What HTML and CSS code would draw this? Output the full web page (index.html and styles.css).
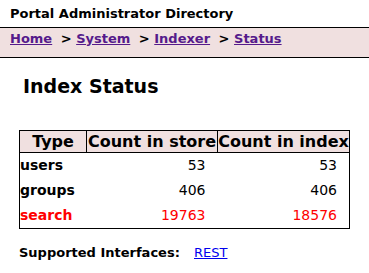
FILE: index.html
```html
<!DOCTYPE html>
<html lang="en">
<head>
  <meta charset="UTF-8" />
  <title>Index Status</title>
  <link rel="stylesheet" href="styles.css">
</head>
<body>
  <div class="topbar">Portal Administrator Directory</div>
  <div class="crumbs">
    <a href="#">Home</a> &gt; <a href="#">System</a> &gt; <a href="#">Indexer</a> &gt; <a href="#">Status</a>
  </div>

  <div class="content">
    <h1>Index Status</h1>

    <table class="status">
      <tr>
        <th class="c-type">Type</th>
        <th class="c-store">Count in store</th>
        <th class="c-index">Count in index</th>
      </tr>
      <tr>
        <td class="name">users</td>
        <td class="num">53</td>
        <td class="num">53</td>
      </tr>
      <tr>
        <td class="name">groups</td>
        <td class="num">406</td>
        <td class="num">406</td>
      </tr>
      <tr class="bad">
        <td class="name">search</td>
        <td class="num">19763</td>
        <td class="num">18576</td>
      </tr>
    </table>

    <p class="ifaces"><b>Supported Interfaces:</b> <a href="#">REST</a></p>
  </div>
</body>
</html>
```

FILE: styles.css
```css
body {
  margin: 0;
  font-family: "DejaVu Sans", Verdana, sans-serif;
  font-size: 13px;
  line-height: 15px;
  color: #000;
  background: #fff;
}

.topbar {
  font-weight: bold;
  padding: 6px 10px 6px;
  border-bottom: 1px solid #000;
}

.crumbs {
  background-color: #f0e0e0;
  border-bottom: 1px solid #000;
  padding: 3px 10px 11px;
  font-weight: bold;
}
.crumbs a {
  color: #551a8b;
  margin-right: 4px;
}

.content {
  padding-left: 19px;
}

h1 {
  font-size: 19px;
  line-height: 22px;
  margin: 17px 0 33px 4px;
}

.status {
  border-collapse: collapse;
  border: 1px solid #000;
  table-layout: fixed;
  width: 331px;
}
.status th {
  background-color: #f0e0e0;
  font-size: 16px;
  line-height: 19px;
  padding: 1px 0;
  border: 1px solid #000;
  white-space: nowrap;
  overflow: hidden;
}
.status .c-type { width: 66px; }
.status .c-store { width: 130px; }
.status .c-index { width: 131px; }

.status td {
  height: 25px;
  padding: 0;
  font-size: 14px;
  line-height: 17px;
}
.status .name {
  font-weight: bold;
}
.status .num {
  text-align: right;
  padding-right: 12px;
}
.status .bad td {
  color: #f00;
}

.ifaces {
  margin: 16px 0 0;
}
.ifaces a {
  color: #0000ee;
  margin-left: 10px;
}
```
